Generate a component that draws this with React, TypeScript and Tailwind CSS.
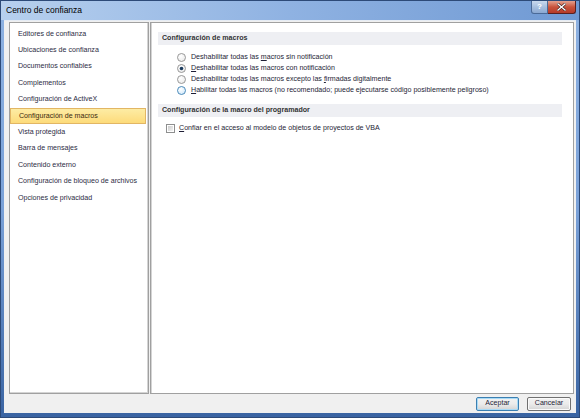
import React from "react";

const font = { fontFamily: '"Liberation Sans", Arial, sans-serif' };

function Radio({ state }: { state: "off" | "on" | "hover" }) {
  const stroke = state === "hover" ? "#3c7fb1" : "#8e8f8f";
  const fill = state === "hover" ? "#cfe8fb" : "#e9e9e9";
  return (
    <svg width="9" height="9" viewBox="0 0 9 9" className="shrink-0">
      <defs>
        <radialGradient id={"rg" + state} cx="0.4" cy="0.35" r="0.7">
          <stop offset="0" stopColor="#ffffff" />
          <stop offset="1" stopColor={fill} />
        </radialGradient>
      </defs>
      <circle cx="4.5" cy="4.5" r="4" fill={`url(#rg${state})`} stroke={stroke} strokeWidth="0.9" />
      {state === "on" && <circle cx="4.5" cy="4.5" r="1.8" fill="#1b3b5e" />}
    </svg>
  );
}

function Check() {
  return (
    <svg width="9" height="9" viewBox="0 0 9 9" className="shrink-0">
      <defs>
        <linearGradient id="cb" x1="0" y1="0" x2="1" y2="1">
          <stop offset="0" stopColor="#cbcbcb" />
          <stop offset="1" stopColor="#f4f4f4" />
        </linearGradient>
      </defs>
      <rect x="0.5" y="0.5" width="8" height="8" fill="#fff" stroke="#8e8f8f" />
      <rect x="2" y="2" width="5" height="5" fill="url(#cb)" />
    </svg>
  );
}

const items = [
  "Editores de confianza",
  "Ubicaciones de confianza",
  "Documentos confiables",
  "Complementos",
  "Configuración de ActiveX",
  "Configuración de macros",
  "Vista protegida",
  "Barra de mensajes",
  "Contenido externo",
  "Configuración de bloqueo de archivos",
  "Opciones de privacidad",
];

export default function App() {
  return (
    <div
      className="w-[580px] h-[418px] flex flex-col bg-gradient-to-b from-[#8eb2e2] via-[#7aa1d8] to-[#3a64a2] border border-[#2d4a78] overflow-hidden"
      style={font}
    >
      {/* Title bar */}
      <div className="h-[19px] shrink-0 flex items-center justify-between bg-gradient-to-r from-[#b7d0ee] via-[#8fb2e2] to-[#6f99d3]">
        <span className="pl-[5px] text-[8.5px] text-black leading-none">Centro de confianza</span>
        <div className="flex self-start mr-[3px]">
          <div className="w-[17px] h-[13px] flex items-center justify-center rounded-bl-[3px] border border-t-0 border-[#4a6a98] bg-gradient-to-b from-[#c9d9ee] via-[#a7bfdf] to-[#8aa8d2] text-[8px] font-bold text-white leading-none">
            ?
          </div>
          <div className="w-[28px] h-[13px] flex items-center justify-center rounded-br-[3px] border border-t-0 border-l-0 border-[#5a2020] bg-gradient-to-b from-[#e3a08f] via-[#c8523b] to-[#b53a28]">
            <svg width="9" height="8" viewBox="0 0 9 8">
              <path d="M1 1 L8 7 M8 1 L1 7" stroke="#3a1a1a" strokeWidth="2.6" strokeLinecap="square" />
              <path d="M1 1 L8 7 M8 1 L1 7" stroke="#ffffff" strokeWidth="1.4" strokeLinecap="square" />
            </svg>
          </div>
        </div>
      </div>

      {/* Client */}
      <div className="flex-1 ml-[3px] mr-[3px] mb-[4px] bg-[#f0f0f0] flex flex-col pl-[5px] pr-[2px] pt-[1px] border-t border-[#e6ecf4]">
        <div className="flex gap-[1px] h-[372px] shrink-0">
          {/* Left panel */}
          <div className="w-[140px] bg-white border border-[#a0a0a0] shadow-[inset_-1px_-1px_0_#d4d4d4] pt-[3px] flex flex-col">
            {items.map((t, i) => (
              <div
                key={t}
                className={
                  "h-[16.4px] flex items-center pl-[8px] text-[7.1px] leading-none " +
                  (i === 5
                    ? "mr-[2px] border border-[#e2b664] bg-gradient-to-b from-[#fdeca4] to-[#fddb7a] pl-[7px] text-[#3a2a10]"
                    : "text-[#2c2c44]")
                }
              >
                {t}
              </div>
            ))}
          </div>

          {/* Right panel */}
          <div className="flex-1 bg-white border border-[#a0a0a0] shadow-[inset_1px_0_0_#d4d4d4] pt-[9px] pl-[7px] pr-[11px] flex flex-col">
            <div className="h-[13px] bg-[#eeeff3] flex items-center pl-[4px] text-[7.1px] font-bold text-[#333333] leading-none">
              Configuración de macros
            </div>
            <div className="flex flex-col pl-[19px] pt-[7px] text-[7.1px] text-[#1e1e36] leading-none">
              <div className="h-[11px] flex items-center gap-[5px]">
                <Radio state="off" />
                <span>
                  Deshabilitar todas las <u>m</u>acros sin notificación
                </span>
              </div>
              <div className="h-[11px] flex items-center gap-[5px]">
                <Radio state="on" />
                <span>
                  <u>D</u>eshabilitar todas las macros con notificación
                </span>
              </div>
              <div className="h-[11px] flex items-center gap-[5px]">
                <Radio state="off" />
                <span>
                  Deshabilitar todas las macros excepto las <u>f</u>irmadas digitalmente
                </span>
              </div>
              <div className="h-[11px] flex items-center gap-[5px]">
                <Radio state="hover" />
                <span>
                  <u>H</u>abilitar todas las macros (no recomendado; puede ejecutarse código posiblemente peligroso)
                </span>
              </div>
            </div>
            <div className="h-[13px] mt-[8px] bg-[#eeeff3] flex items-center pl-[4px] text-[7.1px] font-bold text-[#333333] leading-none">
              Configuración de la macro del programador
            </div>
            <div className="h-[11px] mt-[6px] pl-[8px] flex items-center gap-[4px] text-[7.1px] text-[#1e1e36] leading-none">
              <Check />
              <span>
                <u>C</u>onfiar en el acceso al modelo de objetos de proyectos de VBA
              </span>
            </div>
          </div>
        </div>

        {/* Buttons */}
        <div className="flex justify-end gap-[8px] mt-[3px] pr-[3px]">
          <div className="w-[43px] h-[14px] rounded-[2px] border border-[#3c7fb1] shadow-[inset_0_0_0_1px_#a8daf6] bg-gradient-to-b from-[#f2f2f2] via-[#ebebeb] to-[#d4d4d4] flex items-center justify-center text-[7.1px] text-[#1e1e36] leading-none">
            Aceptar
          </div>
          <div className="w-[44px] h-[14px] rounded-[2px] border border-[#707070] shadow-[inset_0_0_0_1px_#fafafa] bg-gradient-to-b from-[#f2f2f2] via-[#ebebeb] to-[#d4d4d4] flex items-center justify-center text-[7.1px] text-[#1e1e36] leading-none">
            Cancelar
          </div>
        </div>
      </div>
    </div>
  );
}
